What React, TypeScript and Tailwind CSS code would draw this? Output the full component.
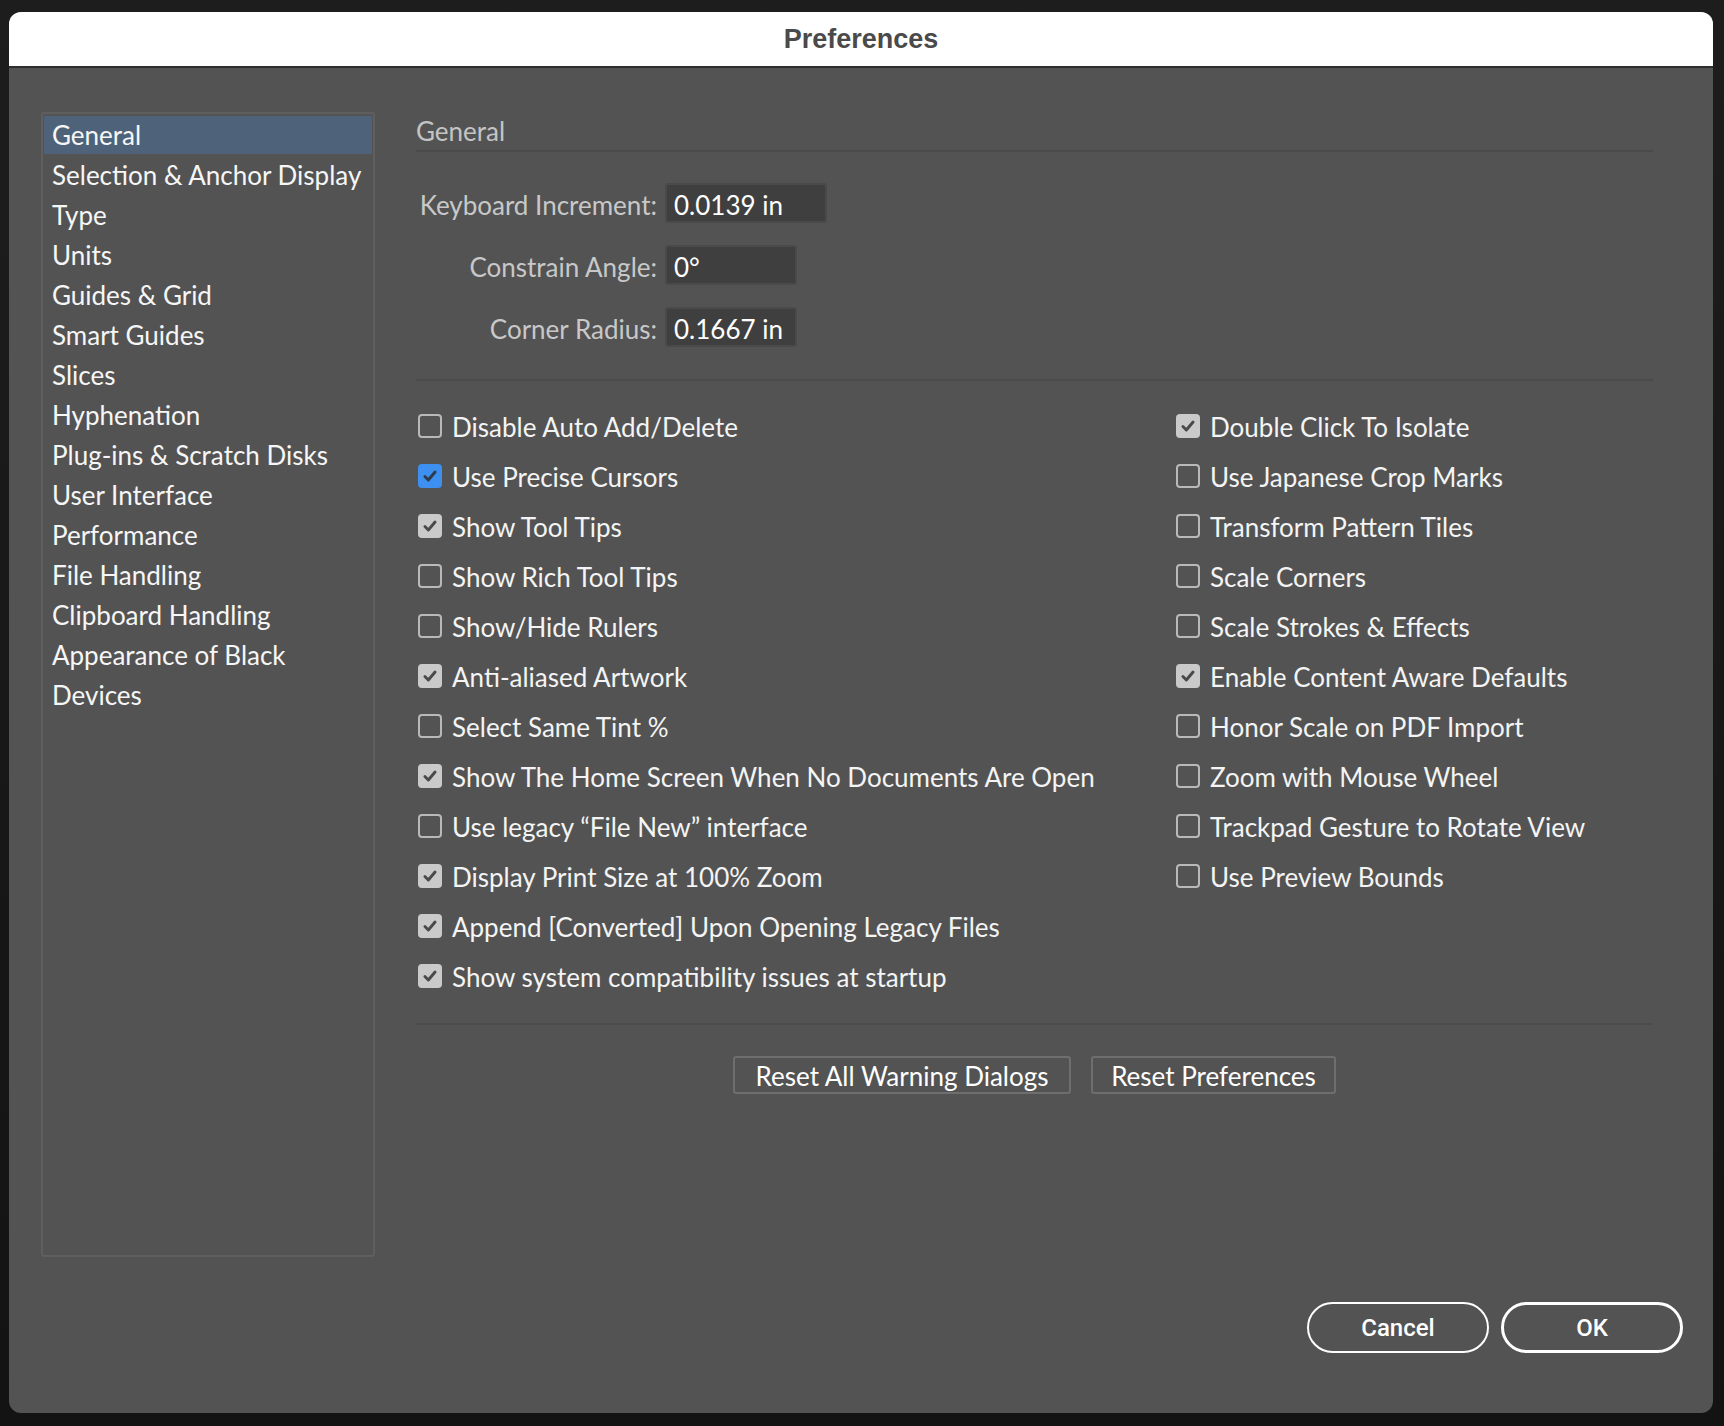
import React from 'react';

type Check = { label: string; state: 'off' | 'on' | 'blue' };

const sections = [
  'General',
  'Selection & Anchor Display',
  'Type',
  'Units',
  'Guides & Grid',
  'Smart Guides',
  'Slices',
  'Hyphenation',
  'Plug-ins & Scratch Disks',
  'User Interface',
  'Performance',
  'File Handling',
  'Clipboard Handling',
  'Appearance of Black',
  'Devices',
];

const leftChecks: Check[] = [
  { label: 'Disable Auto Add/Delete', state: 'off' },
  { label: 'Use Precise Cursors', state: 'blue' },
  { label: 'Show Tool Tips', state: 'on' },
  { label: 'Show Rich Tool Tips', state: 'off' },
  { label: 'Show/Hide Rulers', state: 'off' },
  { label: 'Anti-aliased Artwork', state: 'on' },
  { label: 'Select Same Tint %', state: 'off' },
  { label: 'Show The Home Screen When No Documents Are Open', state: 'on' },
  { label: 'Use legacy “File New” interface', state: 'off' },
  { label: 'Display Print Size at 100% Zoom', state: 'on' },
  { label: 'Append [Converted] Upon Opening Legacy Files', state: 'on' },
  { label: 'Show system compatibility issues at startup', state: 'on' },
];

const rightChecks: Check[] = [
  { label: 'Double Click To Isolate', state: 'on' },
  { label: 'Use Japanese Crop Marks', state: 'off' },
  { label: 'Transform Pattern Tiles', state: 'off' },
  { label: 'Scale Corners', state: 'off' },
  { label: 'Scale Strokes & Effects', state: 'off' },
  { label: 'Enable Content Aware Defaults', state: 'on' },
  { label: 'Honor Scale on PDF Import', state: 'off' },
  { label: 'Zoom with Mouse Wheel', state: 'off' },
  { label: 'Trackpad Gesture to Rotate View', state: 'off' },
  { label: 'Use Preview Bounds', state: 'off' },
];

const fields = [
  { label: 'Keyboard Increment:', value: '0.0139 in', w: 'w-[162px]' },
  { label: 'Constrain Angle:', value: '0°', w: 'w-[132px]' },
  { label: 'Corner Radius:', value: '0.1667 in', w: 'w-[132px]' },
];

function CheckBox({ state }: { state: Check['state'] }) {
  if (state === 'off') {
    return <div className="w-[24px] h-[24px] rounded-[4px] border-2 border-[#b9b9b9] shrink-0" />;
  }
  return (
    <div
      className={`w-[24px] h-[24px] rounded-[4px] shrink-0 flex items-center justify-center ${
        state === 'blue' ? 'bg-[#3d8ff0]' : 'bg-[#cacaca]'
      }`}
    >
      <svg width="18" height="18" viewBox="0 0 16 16" fill="none">
        <path
          d="M3.5 8.5 L6.5 11.5 L12.5 4.5"
          stroke={state === 'blue' ? '#2f3b4a' : '#4a4a4a'}
          strokeWidth="2.6"
          strokeLinecap="round"
          strokeLinejoin="round"
        />
      </svg>
    </div>
  );
}

function CheckRow({ item }: { item: Check }) {
  return (
    <div className="h-[50px] flex items-center gap-[10px]">
      <CheckBox state={item.state} />
      <span className="text-[#f4f4f4] whitespace-nowrap pt-[2px]">{item.label}</span>
    </div>
  );
}

export default function App() {
  return (
    <div
      className="w-[1724px] h-[1426px] bg-gradient-to-b from-[#1d1d1d] to-[#131313] pt-[12px] pl-[9px] text-[26px] leading-[30px]"
      style={{ fontFamily: 'Lato, "Noto Sans", sans-serif' }}
    >
      <div className="w-[1704px] h-[1401px] rounded-[12px] overflow-hidden flex flex-col bg-[#535353]">
        <div className="h-[56px] shrink-0 bg-white border-b-2 border-[#2e2e2e] flex items-center justify-center">
          <span
            className="text-[27px] font-bold text-[#4a4a4a]"
            style={{ fontFamily: '"Liberation Sans", Arial, sans-serif' }}
          >
            Preferences
          </span>
        </div>

        <div className="flex-1 flex flex-col">
          <div className="flex pt-[44px] pl-[32px]">
            <div className="w-[334px] h-[1145px] border-2 border-[#5f5f5f] rounded-[3px] pt-[2px] px-[1px] flex flex-col gap-[2px]">
              {sections.map((s, i) => (
                <div
                  key={s}
                  className={`h-[38px] flex items-center pl-[8px] text-[#f6f6f6] whitespace-nowrap ${
                    i === 0 ? 'bg-[#4e6379]' : ''
                  }`}
                >
                  {s}
                </div>
              ))}
            </div>

            <div className="ml-[41px] w-[1237px] flex flex-col">
              <div className="h-[40px] flex items-center text-[#c4c4c4] border-b-2 border-[#4b4b4b]">General</div>

              <div className="pt-[31px] flex flex-col gap-[22px]">
                {fields.map(f => (
                  <div key={f.label} className="h-[40px] flex items-center gap-[8px]">
                    <span className="w-[241px] text-right text-[#c8c8c8] whitespace-nowrap pt-[4px]">{f.label}</span>
                    <div
                      className={`${f.w} h-[40px] bg-[#3f3f3f] border-2 border-[#4a4a4a] rounded-[3px] flex items-center pl-[7px] pt-[4px] text-white`}
                    >
                      {f.value}
                    </div>
                  </div>
                ))}
              </div>

              <div className="mt-[32px] h-[2px] bg-[#4b4b4b]" />

              <div className="pt-[20px] pl-[2px] flex">
                <div className="w-[758px] flex flex-col">
                  {leftChecks.map(c => (
                    <CheckRow key={c.label} item={c} />
                  ))}
                </div>
                <div className="flex flex-col">
                  {rightChecks.map(c => (
                    <CheckRow key={c.label} item={c} />
                  ))}
                </div>
              </div>

              <div className="mt-[22px] h-[2px] bg-[#4b4b4b]" />

              <div className="pt-[31px] flex justify-center gap-[20px]">
                <button className="w-[338px] h-[38px] border-2 border-[#6e6e6e] rounded-[3px] text-white pt-[2px] leading-[30px]">
                  Reset All Warning Dialogs
                </button>
                <button className="w-[245px] h-[38px] border-2 border-[#6e6e6e] rounded-[3px] text-white pt-[2px] leading-[30px]">
                  Reset Preferences
                </button>
              </div>
            </div>
          </div>

          <div
            className="mt-[45px] pr-[30px] flex justify-end gap-[12px]"
            style={{ fontFamily: 'Roboto, "Liberation Sans", Arial, sans-serif' }}
          >
            <button className="w-[182px] h-[51px] rounded-full border-2 border-white text-white text-[24px] font-medium">
              Cancel
            </button>
            <button className="w-[182px] h-[51px] rounded-full border-[3px] border-white text-white text-[24px] font-medium">
              OK
            </button>
          </div>
        </div>
      </div>
    </div>
  );
}
